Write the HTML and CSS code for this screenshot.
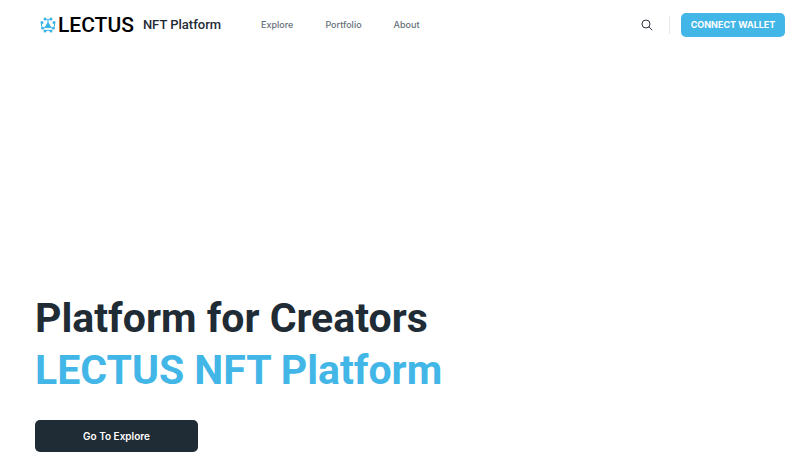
FILE: index.html
```html
<!DOCTYPE html>
<html lang="en">
<head>
    <meta charset="UTF-8">
    <meta name="viewport" content="width=device-width, initial-scale=1.0">
    <title>LECTUS NFT Platform</title>
    <link rel="stylesheet" href="styles.css">
</head>
<body>
    <header class="header">
        <a class="logo" href="#">
            <svg class="logo-icon" viewBox="0 0 32 32" fill="none" stroke="#3bb3e4" stroke-width="2" aria-hidden="true">
                <path d="M16 12V6M12 20l-5 3M20 20l5 3M3 12v7M29 12v7M11 4l5 2 5-2M11 28l5-2 5 2"/>
                <path d="M16 11l6 10H10z" fill="#3bb3e4"/>
                <g fill="#3bb3e4" stroke="none">
                    <circle cx="10" cy="4" r="3"/>
                    <circle cx="22" cy="4" r="3"/>
                    <circle cx="4" cy="11" r="3"/>
                    <circle cx="28" cy="11" r="3"/>
                    <circle cx="5" cy="22" r="3"/>
                    <circle cx="27" cy="22" r="3"/>
                    <circle cx="10" cy="28" r="3"/>
                    <circle cx="22" cy="28" r="3"/>
                </g>
            </svg>
            <span class="logo-name">LECTUS</span>
            <span class="logo-text">NFT Platform</span>
        </a>
        <nav class="nav">
            <a href="#">Explore</a>
            <a href="#">Portfolio</a>
            <a href="#">About</a>
        </nav>
        <div class="actions">
            <button class="search-btn" type="button" aria-label="Search">
                <svg viewBox="0 0 12 12" fill="none" stroke="#343444" aria-hidden="true">
                    <circle cx="5" cy="5" r="4"/>
                    <path d="M8 8l3 3" stroke-linecap="round"/>
                </svg>
            </button>
            <button class="wallet-btn" type="button">CONNECT WALLET</button>
        </div>
    </header>
    <main class="hero">
        <h1 class="hero-title">
            Platform for Creators
            <span class="accent">LECTUS NFT Platform</span>
        </h1>
        <a class="explore-btn" href="#">Go To Explore</a>
    </main>
</body>
</html>
```

FILE: styles.css
```css
* {
    box-sizing: border-box;
}
body {
    font-family: Inter, Arial, sans-serif;
    background-color: #fff;
    color: #1f2b35;
    margin: 0;
    min-height: 100vh;
    display: flex;
    flex-direction: column;
}
a {
    text-decoration: none;
}
button {
    font-family: inherit;
    border: none;
    cursor: pointer;
}
.header {
    display: flex;
    align-items: center;
    height: 49px;
    padding: 0 14px 0 40px;
}
.logo {
    display: flex;
    align-items: center;
    font-family: Roboto, Arial, sans-serif;
    font-weight: 500;
    color: #1f2b35;
}
.logo-icon {
    width: 16px;
    height: 16px;
    margin-right: 2px;
}
.logo-name {
    font-size: 21px;
    color: #000;
    margin-right: 9px;
}
.logo-text {
    font-size: 13px;
}
.nav {
    display: flex;
    gap: 32px;
    margin-left: 40px;
}
.nav a {
    font-size: 9px;
    font-weight: 500;
    color: #66707a;
}
.actions {
    display: flex;
    align-items: center;
    margin-left: auto;
}
.search-btn {
    display: flex;
    background: none;
    padding: 3px 16px 3px 0;
    margin-right: 11px;
    border-right: 1px solid #e8ebee;
}
.search-btn svg {
    width: 12px;
    height: 12px;
}
.wallet-btn {
    width: 104px;
    height: 24px;
    padding: 0;
    border-radius: 5px;
    background-color: #42b6e7;
    color: #fff;
    font-size: 9px;
    font-weight: 700;
}
.wallet-btn:hover {
    background-color: #2a9fd0;
}
.hero {
    margin-top: auto;
    padding: 0 35px 24px;
}
.hero-title {
    margin: 0 0 24px;
    font-family: Roboto, Arial, sans-serif;
    font-size: 41px;
    font-weight: 700;
    line-height: 52px;
}
.accent {
    display: block;
    color: #42b6e7;
}
.explore-btn {
    display: block;
    width: 163px;
    border-radius: 5px;
    background-color: #1f2b35;
    color: #fff;
    font-size: 10px;
    font-weight: 600;
    line-height: 32px;
    text-align: center;
}
.explore-btn:hover {
    background-color: #42b6e7;
}
```
